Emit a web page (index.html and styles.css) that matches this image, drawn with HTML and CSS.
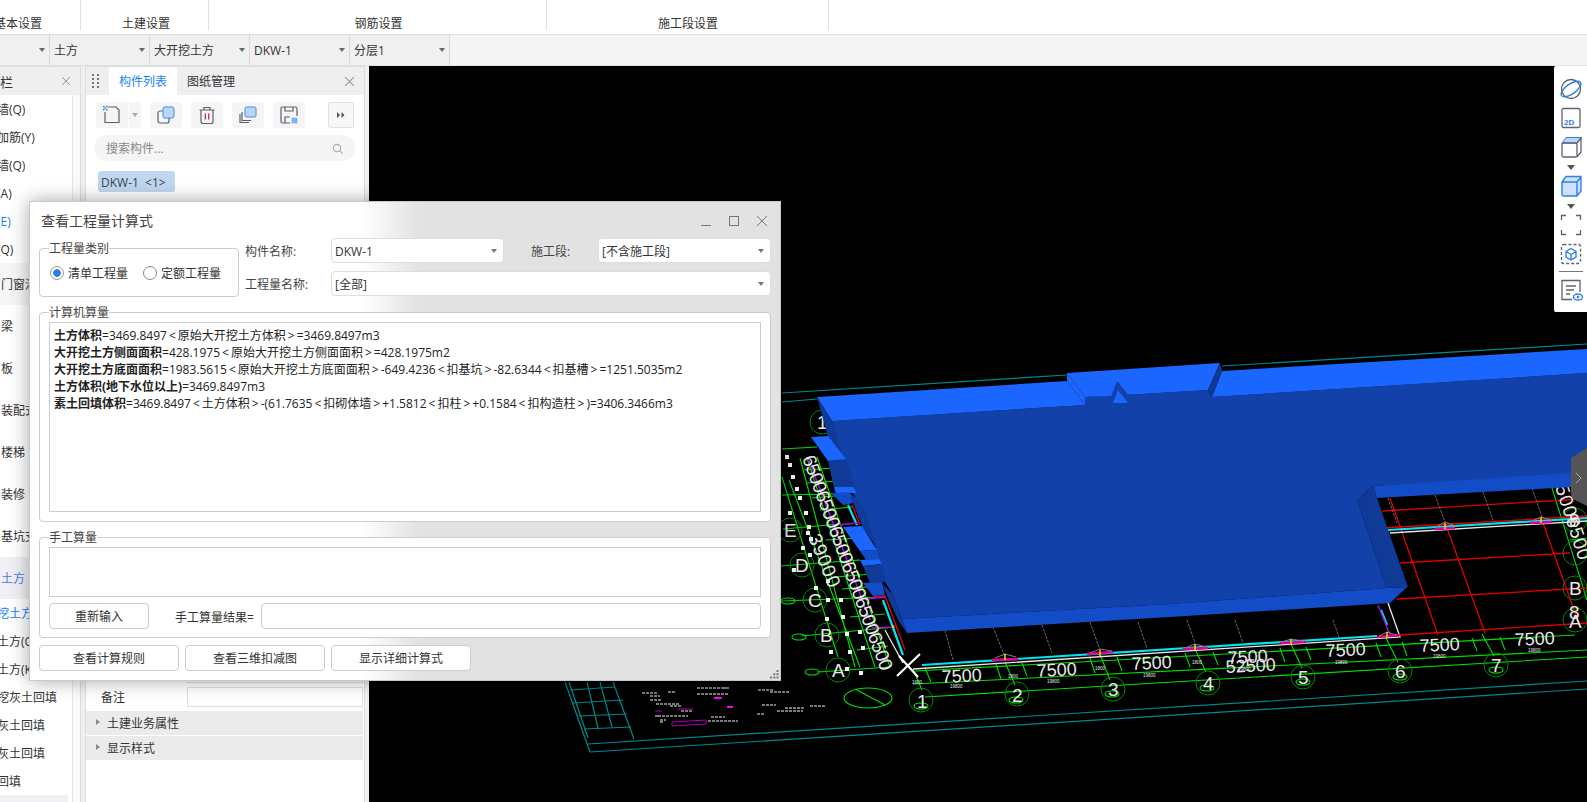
FILE: index.html
```html
<!DOCTYPE html>
<html lang="zh-CN">
<head>
<meta charset="utf-8">
<title>查看工程量计算式</title>
<link rel="stylesheet" href="styles.css">
</head>
<body>
<header class="ribbon">
  <div class="rib rib-a">基本设置</div>
  <div class="rib rib-b">土建设置</div>
  <div class="rib rib-c">钢筋设置</div>
  <div class="rib rib-d">施工段设置</div>
</header>
<nav class="combos">
  <div class="cb cb-first"><span>基础层</span><i class="tri"></i></div>
  <div class="cb"><span>土方</span><i class="tri"></i></div>
  <div class="cb"><span>大开挖土方</span><i class="tri"></i></div>
  <div class="cb"><span>DKW-1</span><i class="tri"></i></div>
  <div class="cb"><span>分层1</span><i class="tri"></i></div>
</nav>
<main class="main">
  <aside class="nav-panel">
    <div class="nav-head"><span class="nav-title">导航栏</span><svg class="x" viewBox="0 0 10 10"><path d="M1 1l8 8M9 1l-8 8"/></svg></div>
    <div class="nav-body">
      <ul class="tree">
        <li class="sub">砌体墙(Q)</li>
        <li class="sub">砌体加筋(Y)</li>
        <li class="sub">保温墙(Q)</li>
        <li class="sub">暗梁(A)</li>
        <li class="sub sub-on">墙垛(E)</li>
        <li class="sub">幕墙(Q)</li>
        <li class="cat cat-soft">门窗洞</li>
        <li class="cat">梁</li>
        <li class="cat">板</li>
        <li class="cat">装配式</li>
        <li class="cat">楼梯</li>
        <li class="cat">装修</li>
        <li class="cat">基坑支护</li>
        <li class="cat cat-on">土方</li>
        <li class="sub sub-on">大开挖土方</li>
        <li class="sub">基槽土方(C)</li>
        <li class="sub">基坑土方(K)</li>
        <li class="sub">大开挖灰土回填</li>
        <li class="sub">基槽灰土回填</li>
        <li class="sub">基坑灰土回填</li>
        <li class="sub">房心回填</li>
        <li class="cat cat-on cat-short"></li>
      </ul>
      <div class="track"></div>
    </div>
  </aside>
  <section class="list-panel">
    <div class="list-head">
      <svg class="grip-v" viewBox="0 0 8 14"><path d="M0 0h2v2H0zM5 0h2v2H5zM0 4h2v2H0zM5 4h2v2H5zM0 8h2v2H0zM5 8h2v2H5zM0 12h2v2H0zM5 12h2v2H5z"/></svg>
      <span class="tab tab-on">构件列表</span><span class="tab">图纸管理</span>
      <svg class="x x-end" viewBox="0 0 10 10"><path d="M1 1l8 8M9 1l-8 8"/></svg>
    </div>
    <div class="tools">
      <span class="tb tb-new"><svg viewBox="0 0 18 18"><path class="ln" d="M2 6v10.500h14V4l-3-3H5"/><path class="bl" d="M0 0h1.500v1.500H0zM3 0h1.500v1.500H3zM1.500 1.500H3V3H1.500zM0 3h1.500v1.500H0zM3 3h1.500v1.500H3z"/></svg></span>
      <span class="tb tb-drop"><i class="tri"></i></span>
      <span class="tb"><svg viewBox="0 0 18 18"><rect class="ln" x="1" y="5" width="11" height="12" rx="2"/><rect class="fillb" x="6" y="1" width="11" height="11" rx="2"/></svg></span>
      <span class="tb"><svg viewBox="0 0 18 18"><path class="ln" d="M3 4.500v11a2 2 0 0 0 2 2h8a2 2 0 0 0 2-2v-11M1.500 4h15M6 4V1.500h6V4"/><path class="rd" d="M7.300 7.500v6M10.700 7.500v6"/></svg></span>
      <span class="tb"><svg viewBox="0 0 18 18"><path class="ln" d="M1 8v8.500h9M3 6v8.500h9"/><rect class="fillb" x="6" y="1" width="11" height="10" rx="1.500"/></svg></span>
      <span class="tb"><svg viewBox="0 0 18 18"><path class="ln" d="M10 17H2.500A1.500 1.500 0 0 1 1 15.500v-13A1.500 1.500 0 0 1 2.500 1h13A1.500 1.500 0 0 1 17 2.500V10M5 1v4h8V1M5 17v-6h5"/><rect class="solidb" x="11" y="11" width="7" height="7"/></svg></span>
      <span class="tb-more"><svg viewBox="0 0 8 6"><path d="M0 0l3 3-3 3zM4.500 0l3 3-3 3z"/></svg></span>
    </div>
    <div class="search"><span>搜索构件...</span><svg viewBox="0 0 12 12"><circle cx="5.500" cy="5.500" r="4"/><path d="M8.500 8.500l3 3"/></svg></div>
    <div class="chip">DKW-1&nbsp; &lt;1&gt;</div>
    <div class="props">
      <div class="prop"><span class="prop-l"></span><span class="prop-v"></span></div>
      <div class="prop"><span class="prop-l">备注</span><span class="prop-v"></span></div>
      <div class="sect"><i class="tri-r"></i>土建业务属性</div>
      <div class="sect"><i class="tri-r"></i>显示样式</div>
    </div>
  </section>
  <section class="canvas">
    <svg class="cad" viewBox="369 66 1218 736" aria-label="三维模型视图">
      <g class="teal">
        <path d="M782 393L1067 375M782 402L817 399M1222 366L1587 344"/>
        <path d="M588 744L1587 681M590 752L1587 689M565 682L590 752M634 739L613 682M569 682L588 738"/>
        <path d="M570 690L615 687M573 703L623 700M579 716L627 714M584 729L631 727M587 682L598 728M600 682L612 727"/>
      </g>
      <g class="note">
        <path d="M642 693h16M650 696h10M650 700h12M656 704h24M658 716h30M660 722h4M668 692h8M697 688h30M697 694h32M722 688h8M758 690h16M770 692h20M757 714h8M670 706h12M681 711h12M655 716h3M708 721h30M711 717h14M762 705h14M785 708h20M810 706h16M777 711h26M660 720h6"/>
      </g>
      <path class="mag" d="M672 722L706 720L706 724L672 726ZM655 711h7M677 709h16"/>
      <path class="magf" d="M714 698h8M727 707h6"/>
      <g class="gn">
        <path d="M915 671L1575 635M913 684L1587 650M925 697L1587 657"/>
        <path d="M913 669L922 690M1005 662L1015 685M1100 654L1110 680M1195 649L1206 672M1291 644L1302 668M1386 638L1398 662M1482 634L1494 656"/>
        <path d="M925 668L931 682M996 664L1001 679M1022 663L1027 676M1090 658L1095 673M1117 657L1122 671M1185 653L1190 667M1213 652L1218 665M1280 648L1285 662M1306 647L1311 660M1376 643L1381 657M1402 642L1407 656M1472 638L1477 651M1500 637L1505 650"/>
        <path d="M782 449L817 447M782 495L832 494M783 529L840 524M780 566L860 560M782 601L885 597M802 636L895 627M818 672L890 667"/>
        <path d="M817 457L890 667M807 458L875 667M800 458L855 667M782 477L838 657M789 480L860 667"/>
        <path d="M804 470L835 468M807 483L838 481M812 498L845 495M820 510L852 507M826 540L860 538M835 577L872 574M842 589L880 586M850 617L885 614M857 650L888 646"/>
        <path d="M1552 488L1587 600M1570 540L1587 538"/>
        <ellipse cx="788" cy="601" rx="7" ry="3"/><ellipse cx="799" cy="637" rx="7" ry="3"/><ellipse cx="812" cy="672" rx="7" ry="3"/>
        <ellipse cx="868" cy="698" rx="24" ry="10"/><path d="M855 689L885 705"/>
        <ellipse cx="921" cy="706" rx="7" ry="3"/><ellipse cx="1016" cy="700" rx="7" ry="3"/><ellipse cx="1112" cy="694" rx="7" ry="3"/><ellipse cx="1207" cy="688" rx="7" ry="3"/><ellipse cx="1303" cy="682" rx="7" ry="3"/><ellipse cx="1400" cy="677" rx="7" ry="3"/><ellipse cx="1496" cy="670" rx="7" ry="3"/>
      </g>
      <g class="bub">
        <circle cx="921" cy="700" r="12"/><circle cx="1017" cy="694" r="12"/><circle cx="1113" cy="689" r="12"/><circle cx="1208" cy="683" r="12"/><circle cx="1303" cy="677" r="12"/><circle cx="1400" cy="671" r="12"/><circle cx="1496" cy="665" r="12"/>
        <circle cx="838" cy="670" r="12"/><circle cx="827" cy="635" r="12"/><circle cx="815" cy="600" r="12"/><circle cx="802" cy="565" r="12"/><circle cx="790" cy="530" r="12"/><circle cx="822" cy="422" r="12"/>
        <circle cx="1575" cy="520" r="12"/><circle cx="1575" cy="553" r="12"/><circle cx="1575" cy="588" r="12"/><circle cx="1575" cy="620" r="12"/>
      </g>
      <path class="red" d="M1382 511L1583 499M1400 563L1570 553M1397 599L1587 588M1400 635L1587 623M1390 498L1438 635M1447 528L1485 633M1543 523L1580 627"/>
      <path class="dash" d="M945 630L953 660M993 627L1005 657M1042 625L1052 653M1090 622L1100 650M1138 622L1147 648M1187 620L1195 643M1235 620L1243 643M1333 620L1339 637M1435 495L1445 522M1483 492L1493 520M1532 488L1542 517M1388 498L1397 523"/>
      <path class="wh" d="M913 669L1400 637L1388 603M885 630L903 663M1390 533L1587 521"/>
      <path class="cy" d="M922 665L1377 636M883 600L903 655M848 505L857 525M1388 530L1587 518M1381 610L1387 625"/>
      <path class="rd2" d="M852 505L860 525M873 597L885 596L905 650M1382 528L1587 516"/>
      <path class="pp" d="M837 525L858 523M865 599L885 597M872 628L893 627M1378 605L1390 635M808 458L870 620"/>
      <path class="mg" d="M992 660L1018 659M1087 654L1113 652M1183 649L1208 648M1280 643L1306 642M1377 637L1400 635M1435 529L1455 528M1530 523L1552 522"/>
      <g class="roof">
        <path d="M995 658L1005 654L1016 657M1090 653L1100 649L1112 651M1185 648L1195 644L1206 647M1282 642L1291 639L1303 641M1379 636L1387 632L1396 635M1436 527L1445 522L1456 526M1532 521L1541 517L1552 520"/>
      </g>
      <path class="ye" d="M1005 654v6M1100 650v6M1195 644v6M1291 639v6M1387 632v6M1445 523v6M1541 517v6M893 625v3"/>
      <path class="x-mark" d="M897 676L920 654M899 656L918 677"/>
      <path class="dots" d="M785 455h4v4h-4zM788 463h4v4h-4zM791 475h4v4h-4zM795 487h4v4h-4zM798 496h4v4h-4zM788 511h4v4h-4zM804 511h4v4h-4zM807 525h4v4h-4zM806 531h4v4h-4zM809 537h4v4h-4zM801 546h4v4h-4zM808 553h4v4h-4zM792 568h4v4h-4zM826 579h4v4h-4zM814 586h4v4h-4zM826 598h4v4h-4zM839 598h4v4h-4zM825 617h4v4h-4zM841 615h4v4h-4zM845 632h4v4h-4zM858 630h4v4h-4zM829 650h4v4h-4zM848 650h4v4h-4zM861 646h4v4h-4zM845 667h4v4h-4zM859 671h4v4h-4z"/>
      <g class="cadtxt">
        <text class="d" transform="translate(942 683) rotate(-3)">7500</text>
        <text class="d" transform="translate(1037 677) rotate(-3)">7500</text>
        <text class="d" transform="translate(1132 670) rotate(-3)">7500</text>
        <text class="d" transform="translate(1228 664) rotate(-3)">7500</text>
        <text class="d" transform="translate(1226 673) rotate(-3)">52500</text>
        <text class="d" transform="translate(1326 657) rotate(-3)">7500</text>
        <text class="d" transform="translate(1420 652) rotate(-3)">7500</text>
        <text class="d" transform="translate(1515 646) rotate(-3)">7500</text>
        <text class="v" transform="translate(802 458) rotate(69.700)" textLength="228" lengthAdjust="spacing">650065006500650065006500</text>
        <text class="v" transform="translate(808 537) rotate(68)" textLength="56" lengthAdjust="spacing">39000</text>
        <text class="v" transform="translate(1555 487) rotate(72)" textLength="78" lengthAdjust="spacing">5006500</text>
        <text class="n" x="832" y="677">A</text><text class="n" x="820" y="642">B</text><text class="n" x="808" y="607">C</text><text class="n" x="795" y="572">D</text><text class="n" x="784" y="537">E</text>
        <text class="n" x="817" y="429">1</text><text class="n" x="917" y="708">1</text><text class="n" x="1012" y="702">2</text><text class="n" x="1108" y="696">3</text><text class="n" x="1203" y="690">4</text><text class="n" x="1298" y="684">5</text><text class="n" x="1395" y="678">6</text><text class="n" x="1491" y="672">7</text>
        <text class="n" x="1569" y="595">B</text><text class="n" x="1569" y="628">A</text><text class="n" x="1569" y="527">8</text><text class="n" x="1569" y="619">8</text>
        <text class="t" x="950" y="688">19800</text><text class="t" x="1047" y="683">19800</text><text class="t" x="1143" y="677">19800</text><text class="t" x="1238" y="671">19800</text><text class="t" x="1335" y="664">19800</text><text class="t" x="1433" y="658">19800</text><text class="t" x="1528" y="652">19800</text>
        <text class="t" x="912" y="684">1800</text><text class="t" x="1008" y="678">1800</text><text class="t" x="1095" y="670">1800</text><text class="t" x="1192" y="664">1800</text>
      </g>
      <polygon class="body" points="832,421 1085,405 1085,397 1125,395 1208,390 1212,397 1587,373 1587,474 1373,486 1357,500 1387,588 1170,604 902,619 893,595 885,582 875,545 862,510 853,493 843,470"/>
      <polygon class="front" points="902,619 1170,604 1387,588 1407,587 1390,603 1170,617 907,633"/>
      <polygon class="front" points="1373,486 1571,473 1571,487 1377,498"/>
      <polygon class="side" points="1357,500 1373,486 1377,498 1408,587 1387,588"/>
      <polygon class="top" points="817,397 1067,381 1085,405 832,421"/>
      <polygon class="top" points="1067,373 1085,397 1085,405 1067,381"/>
      <polygon class="top" points="1067,373 1220,363 1208,390 1125,395 1118,382 1112,396 1085,397"/>
      <polygon class="side" points="1220,364 1222,370 1212,397 1208,390"/>
      <polygon class="top" points="1212,397 1222,371 1587,349 1587,373"/>
      <polygon class="body" points="1117,381 1135,403 1108,405"/>
      <polygon class="top" points="1113,403 1118,390 1128,403"/>
      <polygon class="side" points="817,397 832,421 843,457 828,437"/>
      <polygon class="side" points="828,461 846,459 857,493 835,492"/>
      <polygon class="top" points="811,437 828,436 846,459 828,461"/>
      <polygon class="top" points="834,487 853,487 857,493 836,493"/>
      <polygon class="front" points="831,493 850,492 853,503 843,505"/>
      <polygon class="side" points="850,493 862,503 877,548 862,526 853,503"/>
      <polygon class="top" points="843,527 862,526 877,550 860,551"/>
      <polygon class="front" points="860,551 877,550 879,559 866,560"/>
      <polygon class="top" points="860,560 879,559 882,564 863,566"/>
      <polygon class="side" points="863,566 882,564 886,582 870,583"/>
      <polygon class="front" points="863,583 882,582 885,595 873,596"/>
      <polygon class="side" points="882,583 893,595 902,619 907,633 898,620 888,598"/>
    </svg>
    <div class="handle"><svg viewBox="0 0 16 58"><path d="M0 10L16 0V58L4 52Q0 50 0 46Z"/><path class="chev" d="M5 25l5 5-5 5"/></svg></div>
    <aside class="view-bar">
      <svg class="vi" viewBox="0 0 24 24"><circle class="g" cx="12" cy="12" r="9.500"/><ellipse class="b" cx="12" cy="12" rx="11.500" ry="5" transform="rotate(-35 12 12)"/></svg>
      <svg class="vi" viewBox="0 0 24 24"><rect class="g" x="3" y="2.500" width="18" height="19" rx="1.500"/><text class="v2d" x="5" y="18.500">2D</text></svg>
      <svg class="vi vi-cube" viewBox="0 0 24 24"><path class="lt" d="M3 8L7 2.500H22L18 8Z"/><rect class="g" x="3" y="8" width="15" height="14" rx="1.500"/><path class="g" d="M18 8L22 3V17L18 22"/></svg>
      <i class="vi-tri"></i>
      <svg class="vi vi-cube" viewBox="0 0 24 24"><path class="lt2" d="M3 8L7 2.500H22V17L18 22H3Z"/><path class="b" d="M3 8L7 2.500H22V17L18 22H4.500A1.500 1.500 0 0 1 3 20.500ZM3 8H18V22M18 8L22 3"/></svg>
      <i class="vi-tri"></i>
      <svg class="vi" viewBox="0 0 24 24"><path class="g" d="M7 2.500H2.500V7M17 2.500H21.500V7M7 21.500H2.500V17M17 21.500H21.500V17"/></svg>
      <svg class="vi" viewBox="0 0 24 24"><rect class="g dash-b" x="2.500" y="2.500" width="19" height="19" rx="2"/><path class="b" d="M12 6.500L17 9.500V15L12 18L7 15V9.500ZM7 9.500L12 12.500L17 9.500M12 12.500V18"/></svg>
      <hr class="vi-sep">
      <svg class="vi" viewBox="0 0 24 24"><path class="g" d="M13 21.500H3V2.500H21V14M7 8H17M7 12H15M7 16H11"/><ellipse class="b" cx="19" cy="19" rx="4.500" ry="3"/><circle class="bf" cx="19" cy="19" r="1.300"/></svg>
    </aside>
  </section>
</main>

<div class="dialog">
  <div class="dlg-title">
    <span class="dlg-name">查看工程量计算式</span>
    <svg class="dlg-btn" viewBox="0 0 10 10"><path d="M0 9.500h10"/></svg>
    <svg class="dlg-btn" viewBox="0 0 10 10"><rect x=".5" y=".5" width="9" height="9"/></svg>
    <svg class="dlg-btn" viewBox="0 0 10 10"><path d="M0 0l10 10M10 0L0 10"/></svg>
  </div>
  <div class="dlg-top">
    <div class="grp grp-kind">
      <span class="legend">工程量类别</span>
      <label class="radio"><i class="dot dot-on"></i><span class="radio-t">清单工程量</span></label>
      <label class="radio"><i class="dot"></i><span class="radio-t">定额工程量</span></label>
    </div>
    <div class="fields">
      <span class="f-label">构件名称:</span>
      <div class="combo">DKW-1<i class="tri"></i></div>
      <span class="f-label f-mid">施工段:</span>
      <div class="combo">[不含施工段]<i class="tri"></i></div>
      <span class="f-label">工程量名称:</span>
      <div class="combo combo-wide">[全部]<i class="tri"></i></div>
    </div>
  </div>
  <div class="grp grp-calc">
    <span class="legend">计算机算量</span>
    <div class="calc">
      <div><b>土方体积</b>=3469.8497<span class="br">&lt;</span>原始大开挖土方体积<span class="br">&gt;</span>=3469.8497m3</div>
      <div><b>大开挖土方侧面面积</b>=428.1975<span class="br">&lt;</span>原始大开挖土方侧面面积<span class="br">&gt;</span>=428.1975m2</div>
      <div><b>大开挖土方底面面积</b>=1983.5615<span class="br">&lt;</span>原始大开挖土方底面面积<span class="br">&gt;</span>-649.4236<span class="br">&lt;</span>扣基坑<span class="br">&gt;</span>-82.6344<span class="br">&lt;</span>扣基槽<span class="br">&gt;</span>=1251.5035m2</div>
      <div><b>土方体积(地下水位以上)</b>=3469.8497m3</div>
      <div><b>素土回填体积</b>=3469.8497<span class="br">&lt;</span>土方体积<span class="br">&gt;</span>-(61.7635<span class="br">&lt;</span>扣砌体墙<span class="br">&gt;</span>+1.5812<span class="br">&lt;</span>扣柱<span class="br">&gt;</span>+0.1584<span class="br">&lt;</span>扣构造柱<span class="br">&gt;</span>)=3406.3466m3</div>
    </div>
  </div>
  <div class="grp grp-manual">
    <span class="legend">手工算量</span>
    <div class="manual"></div>
    <div class="man-row">
      <button class="btn btn-re">重新输入</button>
      <span class="man-label">手工算量结果=</span>
      <div class="man-input"></div>
    </div>
  </div>
  <div class="dlg-btns">
    <button class="btn">查看计算规则</button>
    <button class="btn">查看三维扣减图</button>
    <button class="btn">显示详细计算式</button>
  </div>
  <svg class="resize" viewBox="0 0 9 9"><path d="M6.500 0h2v2h-2zM3.300 3.300h2v2h-2zM6.500 3.300h2v2h-2zM0 6.500h2v2H0zM3.300 6.500h2v2h-2zM6.500 6.500h2v2h-2z"/></svg>
</div>
</body>
</html>
```

FILE: styles.css
```css
* { box-sizing: border-box; }
html, body { margin: 0; height: 100%; }
body {
  width: 1587px; height: 802px; overflow: hidden; position: relative;
  font: 12px/1.4 "Open Sans", "Noto Sans CJK SC", "Liberation Sans", sans-serif;
  color: #333; background: #f0f0f0;
  display: flex; flex-direction: column;
}
ul { list-style: none; margin: 0; padding: 0; }
i { display: block; font-style: normal; }

/* ribbon */
.ribbon { display: flex; height: 35px; background: #fff; border-bottom: 1px solid #dcdcdc; margin-left: -44px; flex: none; }
.rib { height: 30px; border-right: 1px solid #dedede; display: flex; align-items: flex-end; justify-content: center; line-height: 12px; }
.rib-a { width: 125px; }
.rib-b { width: 128px; padding-left: 3px; }
.rib-c { width: 338px; padding-left: 2px; }
.rib-d { width: 282px; padding-left: 1px; }

/* combo row */
.combos { display: flex; height: 31px; background: #f5f5f5; border-bottom: 1px solid #e2e2e2; margin-left: -50px; flex: none; }
.cb { width: 100px; background: #f0f0f1; border-right: 1px solid #d8d8d8; padding: 2px 4px 0; display: flex; align-items: center; justify-content: space-between; }
.cb .tri { margin-top: -2px; }
.tri { width: 0; height: 0; border: 3.500px solid transparent; border-top: 4px solid #666; border-bottom: 0; flex: none; }

/* panes */
.main { display: flex; flex: 1; min-height: 0; }
.nav-panel { width: 81px; margin-right: 4px; background: #fff; border-right: 1px solid #dcdcdc; border-top: 1px solid #dcdcdc; display: flex; flex-direction: column; flex: none; overflow: hidden; }
.nav-head { height: 28px; background: #efeff1; display: flex; align-items: center; justify-content: space-between; padding-right: 9px; flex: none; }
.nav-title { margin-left: -26px; font-size: 13px; line-height: 20px; padding-top: 2px; }
.x { width: 10px; height: 10px; fill: none; stroke: #999; stroke-width: 1; flex: none; }
.nav-body { display: flex; flex: 1; min-height: 0; }
.tree { width: 72px; flex: none; overflow: hidden; }
.tree li { white-space: nowrap; }
.sub { height: 28px; line-height: 30px; margin-left: -27px; }
.sub-on { color: #1a7dff; }
.cat { height: 42px; line-height: 44px; padding-left: 1px; }
.cat-soft { background: #f6f6f7; }
.cat-on { background: #f0f0f4; color: #4a78d8; }
.cat-short { width: 68px; }
.track { flex: 1; border-left: 1px solid #e6e6e6; background: #fafafa; }

.list-panel { width: 280px; flex: none; background: #fff; border: 1px solid #dcdcdc; border-bottom: 0; display: flex; flex-direction: column; overflow: hidden; }
.list-head { height: 28px; background: #efeff1; display: flex; align-items: center; flex: none; }
.grip-v { width: 8px; height: 14px; fill: #777; margin: 0 9px 0 6px; flex: none; }
.tab { height: 28px; line-height: 29px; padding: 0 10px; }
.tab-on { background: #fff; color: #1a7dff; }
.x-end { margin-left: auto; margin-right: 9px; width: 11px; height: 11px; }
.tools { display: flex; align-items: center; padding: 7px 10px 0 10px; height: 33px; flex: none; }
.tb { width: 32px; height: 26px; background: #f5f5f5; border-radius: 3px; display: flex; align-items: center; justify-content: center; margin-right: 9px; flex: none; }
.tb svg { width: 18px; height: 18px; }
.tb-new { margin-right: 1px; border-radius: 3px 0 0 3px; }
.tb-drop { width: 12px; border-radius: 0 3px 3px 0; }
.tb-drop .tri { border-top-color: #aaa; }
.ln { fill: none; stroke: #55606e; stroke-width: 1.200; }
.bl { fill: #3b82e6; }
.fillb { fill: #bcd6f8; stroke: #3d8bf0; stroke-width: 1; }
.solidb { fill: #7fb2f2; stroke: #fff; stroke-width: 1; }
.rd { fill: none; stroke: #e01818; stroke-width: 1.200; }
.tb-more { width: 26px; height: 26px; margin-left: 14px; border: 1px solid #e0e0e0; border-radius: 3px; background: #f7f7f7; display: flex; align-items: center; justify-content: center; flex: none; }
.tb-more svg { width: 8px; height: 6px; fill: #555; }
.search { height: 26px; margin: 7px 9px 0 8px; border-radius: 13px; background: #f5f5f5; display: flex; align-items: center; justify-content: space-between; padding: 2px 12px 0; color: #888; flex: none; }
.search svg { width: 11px; height: 11px; fill: none; stroke: #aaa; stroke-width: 1.200; margin-top: -2px; }
.chip { width: 77px; height: 21px; line-height: 23px; margin: 10px 0 0 12px; background: #bfd7f1; border-radius: 3px; padding-left: 3px; color: #444; white-space: nowrap; flex: none; }
.props { margin-top: 471px; flex: none; }
.prop { display: flex; height: 20px; margin-bottom: 4px; align-items: center; width: 277px; }
.prop-l { width: 101px; padding-left: 15px; line-height: 20px; padding-top: 1px; }
.prop-v { flex: 1; align-self: stretch; border: 1px solid #e0e0e0; }
.sect { height: 24px; line-height: 26px; width: 277px; background: #ebebeb; margin-bottom: 1px; padding-left: 21px; position: relative; }
.tri-r { position: absolute; left: 10px; top: 8px; width: 0; height: 0; border: 3.500px solid transparent; border-left: 4px solid #888; border-right: 0; }

/* canvas */
.canvas { flex: 1; min-width: 0; background: #000; position: relative; margin-left: 4px; overflow: hidden; }
.cad { display: block; width: 100%; height: 100%; }
.cad path, .cad ellipse, .cad circle { fill: none; }
.teal { stroke: #00898e; stroke-width: 1.200; }
.note { stroke: #f4f4f4; stroke-width: 1.200; stroke-dasharray: 3 1; }
.mag { stroke: #b000b0; stroke-width: 1; }
.magf { stroke: #ff00ff; stroke-width: 2; }
.gn { stroke: #00e000; stroke-width: 1.100; }
.bub { stroke: #008a00; stroke-width: 1; }
.red { stroke: #e00000; stroke-width: 1.300; }
.dash { stroke: #6f6464; stroke-width: 1; stroke-dasharray: 3 1; }
.wh { stroke: #e8e8e8; stroke-width: 1.300; }
.cy { stroke: #00e5f0; stroke-width: 2.200; }
.rd2 { stroke: #f00000; stroke-width: 1.300; }
.pp { stroke: #a010d8; stroke-width: 1.500; }
.mg { stroke: #e0009a; stroke-width: 2.500; }
.roof { stroke: #8a7f70; stroke-width: 1; }
.ye { stroke: #ffd800; stroke-width: 1.500; }
.x-mark { stroke: #fff; stroke-width: 2.200; }
.cad .dots { fill: #f2f2f2; }
.cadtxt { font-family: "Liberation Sans", sans-serif; fill: #e8e8e8; }
.cadtxt .d { font-size: 18px; }
.cadtxt .v { font-size: 19px; }
.cadtxt .n { font-size: 19px; }
.cadtxt .t { font-size: 4.500px; }
.body { fill: #1241a9; }
.front { fill: #134cc7; }
.side { fill: #0f3a98; }
.top { fill: #1a66ff; }

.handle { position: absolute; right: 0; top: 382px; width: 16px; height: 58px; }
.handle svg { display: block; width: 16px; height: 58px; }
.handle path { fill: #555; }
.handle .chev { fill: none; stroke: #aaa; stroke-width: 1; }

.view-bar { position: absolute; right: 0; top: 0; width: 33px; height: 246px; background: #fff; border-radius: 2px 0 0 2px; display: flex; flex-direction: column; align-items: center; padding-top: 11px; }
.vi { display: block; width: 24px; height: 24px; flex: none; margin-bottom: 5px; }
.vi .g { fill: none; stroke: #5c6470; stroke-width: 1.300; }
.vi .b { fill: none; stroke: #2f80ed; stroke-width: 1.400; }
.vi .lt { fill: #bcd6f8; stroke: #2f80ed; stroke-width: 1; }
.vi .lt2 { fill: #cfe2fb; }
.vi .bf { fill: #2f80ed; }
.v2d { font: bold 8px "Liberation Sans", sans-serif; fill: #2f80ed; }
.dash-b { stroke-dasharray: 3 2; }
.vi-cube { margin-bottom: 6px; }
.vi-tri { width: 0; height: 0; border: 4px solid transparent; border-top: 5px solid #555; border-bottom: 0; margin-bottom: 4px; flex: none; }
.vi-sep { width: 24px; height: 1px; margin: 0 0 6px; border: 0; background: #777; flex: none; }

/* dialog */
.dialog {
  position: absolute; left: 29px; top: 201px; width: 752px; height: 480px;
  border: 1px solid #c8c8c8; padding: 0 9px;
  background: linear-gradient(90deg, #fff 0, #fff 44%, #e2e2e2 52%, #e2e2e2 100%);
  box-shadow: 0 0 18px rgba(0, 0, 0, .35);
}
.dlg-title { height: 36px; display: flex; align-items: center; gap: 18px; padding: 2px 4px 0 2px; }
.dlg-name { font-size: 14px; margin-right: auto; color: #444; }
.dlg-btn { width: 10px; height: 10px; fill: none; stroke: #777; stroke-width: 1; flex: none; }
.dlg-top { display: flex; height: 59px; }
.grp { position: relative; border: 1px solid #ccc; border-radius: 4px; background: #fff; }
.legend { position: absolute; left: 9px; top: -9px; line-height: 18px; height: 16px; background: #fff; color: #444; }
.grp-kind { width: 200px; height: 49px; margin-top: 10px; display: flex; align-items: center; padding-left: 10px; gap: 15px; background: transparent; }
.radio { display: flex; align-items: center; gap: 4px; }
.radio-t { padding-top: 2px; line-height: 17px; }
.dot { width: 14px; height: 14px; border: 1px solid #888; border-radius: 50%; background: #fff; flex: none; }
.dot-on { border-color: #999; background: radial-gradient(circle, #2b7de9 0 3.500px, #fff 4px); }
.fields { width: 526px; margin-left: 6px; display: grid; grid-template-columns: 86px 173px 27px 67px 173px; grid-template-rows: 25px 25px; row-gap: 8px; }
.f-label { line-height: 28px; color: #444; white-space: nowrap; }
.f-mid { grid-column: 4; }
.combo { background: #fff; border: 1px solid #ddd; border-radius: 4px; padding: 3px 6px 0 3px; display: flex; align-items: center; justify-content: space-between; line-height: 20px; }
.combo-wide { grid-column: 2 / 6; }
.combo .tri { border-top-color: #777; margin-top: -3px; }
.grp-calc { height: 210px; margin-top: 15px; padding: 9px; }
.calc { height: 190px; border: 1px solid #ccc; padding: 4px 4px; line-height: 17px; color: #222; background: #fff; white-space: nowrap; overflow: hidden; }
.calc b { font-weight: 700; }
.br { margin: 0 2px; }
.grp-manual { height: 101px; margin-top: 15px; padding: 9px 9px 0; }
.manual { height: 50px; border: 1px solid #ccc; background: #fff; }
.man-row { display: flex; align-items: center; height: 26px; margin-top: 6px; }
.btn { font: inherit; color: #333; height: 26px; background: #fff; border: 1px solid #ccc; border-radius: 4px; padding: 2px 0 0; width: 140px; }
.btn-re { width: 100px; }
.man-label { margin-left: 26px; width: 86px; white-space: nowrap; padding-top: 2px; line-height: 17px; }
.man-input { flex: 1; height: 26px; border: 1px solid #ccc; border-radius: 4px; background: #fff; }
.dlg-btns { display: flex; gap: 6px; margin-top: 7px; }
.resize { position: absolute; right: 1px; bottom: 1px; width: 9px; height: 9px; fill: #777; }
```
